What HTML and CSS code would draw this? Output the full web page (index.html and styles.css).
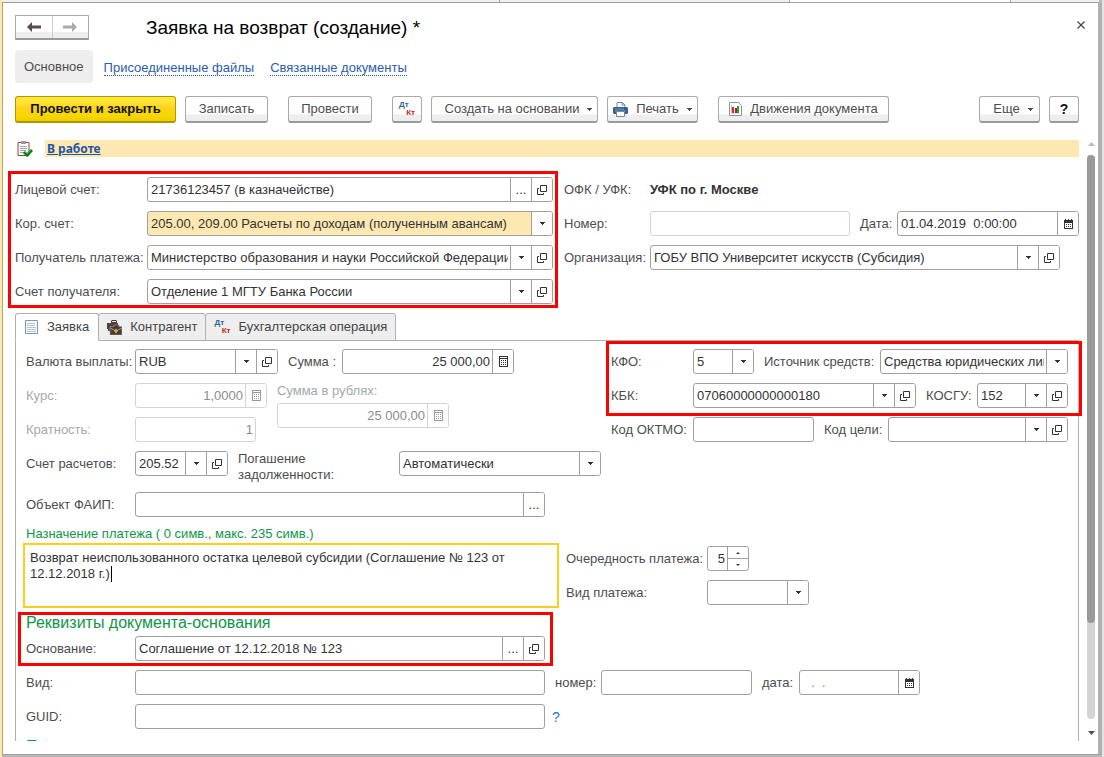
FILE: index.html
```html
<!DOCTYPE html>
<html lang="ru">
<head>
<meta charset="utf-8">
<title>Заявка на возврат (создание) *</title>
<link rel="stylesheet" href="styles.css">
</head>
<body>
<svg class="sprite" aria-hidden="true">
  <symbol id="down" viewBox="0 0 5 3"><path d="M0 0h5v1H4v1H3v1H2V2H1V1H0z"/></symbol>
  <symbol id="up" viewBox="0 0 5 3"><path d="M2 0h1v1h1v1h1v1H0V2h1V1h1z"/></symbol>
  <symbol id="open" viewBox="0 0 10 10"><path d="M3.500 .5h6v6h-6zM2 3.500H.5v6h6V8" fill="none" stroke="currentColor"/></symbol>
  <symbol id="calendar" viewBox="0 0 9 10"><path d="M0 1h1V0h1v1h2V0h1v1h2V0h1v1h1v9H0zM1 4v5h7V4z" fill-rule="evenodd"/><path d="M2 5h1v1H2zM4 5h1v1H4zM6 5h1v1H6zM2 7h1v1H2zM4 7h1v1H4zM6 7h1v1H6z"/></symbol>
  <symbol id="calc" viewBox="0 0 9 11"><path d="M0 0h9v11H0zM1 1v1h7V1zM1 3v7h7V3z" fill-rule="evenodd"/><path d="M2 4h1v1H2zM4 4h1v1H4zM6 4h1v1H6zM2 6h1v1H2zM4 6h1v1H4zM6 6h1v1H6zM2 8h1v1H2zM4 8h1v1H4zM6 8h1v1H6z"/></symbol>
</svg>
<div class="desktop">
  <div class="strip"><span class="strip-tab wide"></span><span class="strip-tab mid"></span><span class="strip-tab open"></span><span class="strip-tab rest"></span></div>
  <main class="window">
    <header class="titlebar">
      <div class="history">
        <button aria-label="Назад"><svg width="14" height="10" viewBox="0 0 14 10"><path d="M0 5l5-5v3.500h9v3H5V10z" fill="#5d4a4a"/></svg></button>
        <button aria-label="Вперед"><svg width="14" height="10" viewBox="0 0 14 10"><path d="M14 5L9 0v3.500H0v3h9V10z" fill="#aaa"/></svg></button>
      </div>
      <h1>Заявка на возврат (создание) *</h1>
      <button class="close" aria-label="Закрыть"><svg width="8" height="8" viewBox="0 0 8 8"><path d="M.5 .5l7 7M7.500 .5l-7 7" stroke="#444" stroke-width="1.200"/></svg></button>
    </header>
    <nav class="sections">
      <span class="current">Основное</span>
      <a href="#files">Присоединенные файлы</a>
      <a href="#linked">Связанные документы</a>
    </nav>
    <div class="toolbar">
      <button class="btn primary">Провести и закрыть</button>
      <button class="btn w83">Записать</button>
      <button class="btn w84 apart">Провести</button>
      <button class="btn square apart" aria-label="Дт Кт"><span class="dtkt"><b>Дт</b><b>Кт</b></span></button>
      <button class="btn create">Создать на основании <svg class="arrow"><use href="#down"/></svg></button>
      <button class="btn print"><svg width="15" height="15" viewBox="0 0 15 15"><path d="M4 6V.5h5.500L12 3v3" fill="#fff" stroke="#6d87a3"/><path d="M9 .5V3h3" fill="none" stroke="#6d87a3"/><path d="M1 5h13l1 1v5l-1 1H1l-1-1V6z" fill="#355f88"/><path d="M2 7h9M2 9h11" stroke="#7397b8"/><path d="M3.500 9.500h8v5h-8z" fill="#fff" stroke="#6d87a3"/></svg> Печать <svg class="arrow"><use href="#down"/></svg></button>
      <button class="btn moves apart"><svg width="13" height="14" viewBox="0 0 13 14"><path d="M.5 .5h9l3 3v10H.5z" fill="#fff" stroke="#8297a7"/><path d="M2.500 3v8h8" fill="none" stroke="#b6c3cc"/><path d="M3 5h2v6H3z" fill="#e22"/><path d="M6 6h2v5H6z" fill="#a22"/><path d="M8 4h2v7H8z" fill="#27a32a"/></svg> Движения документа</button>
      <span class="spring"></span>
      <button class="btn more">Еще <svg class="arrow"><use href="#down"/></svg></button>
      <button class="btn square help">?</button>
    </div>
    <div class="scroll">
      <div class="content">
        <div class="status">
          <svg width="16" height="16" viewBox="0 0 16 16"><path d="M1 1.500h11v13H1z" fill="#fff" stroke="#8b4b3b"/><path d="M4 0h5v3H4z" fill="#999"/><path d="M3 5.500h7M3 7.500h7M3 9.500h6M3 11.500h4" stroke="#9aa5ad"/><path d="M7 11l3 3 5-5" fill="none" stroke="#087d15" stroke-width="3"/><path d="M8 11l2 2 4-4" fill="none" stroke="#23b52d"/></svg>
          <div class="band"><a href="#state">В работе</a></div>
        </div>

        <section class="head">
          <div class="rows accounts marked">
            <div class="row"><label for="acc">Лицевой счет:</label><div class="field"><input id="acc" value="21736123457 (в казначействе)"><button aria-label="Выбрать">...</button><button aria-label="Открыть"><svg class="i10"><use href="#open"/></svg></button></div></div>
            <div class="row"><label for="cor">Кор. счет:</label><div class="field tinted"><select id="cor"><option>205.00, 209.00 Расчеты по доходам (полученным авансам)</option></select><span class="cell"><svg class="arrow"><use href="#down"/></svg></span></div></div>
            <div class="row"><label for="rec">Получатель платежа:</label><div class="field"><input id="rec" value="Министерство образования и науки Российской Федерации"><button aria-label="Список"><svg class="arrow"><use href="#down"/></svg></button><button aria-label="Открыть"><svg class="i10"><use href="#open"/></svg></button></div></div>
            <div class="row"><label for="racc">Счет получателя:</label><div class="field"><input id="racc" value="Отделение 1 МГТУ Банка России"><button aria-label="Список"><svg class="arrow"><use href="#down"/></svg></button><button aria-label="Открыть"><svg class="i10"><use href="#open"/></svg></button></div></div>
          </div>
          <div class="rows org">
            <div class="row"><span class="label">ОФК / УФК:</span><strong>УФК по г. Москве</strong></div>
            <div class="row"><label for="num">Номер:</label><div class="field dim"><input id="num" disabled></div><label class="next l37" for="date">Дата:</label><div class="field w182"><input id="date" value="01.04.2019  0:00:00"><button aria-label="Календарь"><svg class="ical"><use href="#calendar"/></svg></button></div></div>
            <div class="row short"><label for="orgn">Организация:</label><div class="field"><input id="orgn" value="ГОБУ ВПО Университет искусств (Субсидия)"><button aria-label="Список"><svg class="arrow"><use href="#down"/></svg></button><button aria-label="Открыть"><svg class="i10"><use href="#open"/></svg></button></div></div>
          </div>
        </section>

        <div class="tabs" role="tablist">
          <button role="tab" aria-selected="true" class="tab active"><svg width="14" height="14" viewBox="0 0 14 14"><path d="M.5 .5h12v13H.5z" fill="#f7fafc" stroke="#8397b0"/><path d="M2 3.500h8M2 5.500h8M2 7.500h9M2 9.500h9M2 11.500h9" stroke="#b5c7cf"/></svg>Заявка</button>
          <button role="tab" class="tab"><svg width="15" height="15" viewBox="0 0 15 15"><path d="M0 3h4V1l1-1h4l1 1v2h1v8H1V9H0z" fill="#4c4340"/><path d="M5 1.500h4" stroke="#ddd"/><path d="M3 6.500h4V5h5v1.500h3V15H3z" fill="#443c39" stroke="#a79a90" stroke-width=".6"/><path d="M3 8l6 3 6-3" fill="none" stroke="#a79a90"/><path d="M9 8.500l2 2.500-2 2.500L7 11z" fill="#f3a327"/></svg>Контрагент</button>
          <button role="tab" class="tab"><span class="dtkt"><b>Дт</b><b>Кт</b></span>Бухгалтерская операция</button>
        </div>

        <section class="panel">
          <div class="pay">
            <div class="rows money">
              <div class="row"><label for="cur">Валюта выплаты:</label><div class="field w143"><input id="cur" value="RUB"><button aria-label="Список"><svg class="arrow"><use href="#down"/></svg></button><button aria-label="Открыть"><svg class="i10"><use href="#open"/></svg></button></div><label class="next l54" for="sum">Сумма :</label><div class="field w172"><input class="num" id="sum" value="25 000,00"><button aria-label="Калькулятор"><svg class="icalc"><use href="#calc"/></svg></button></div></div>
              <div class="rates">
                <div class="rows">
                  <div class="row dimrow"><label for="rate">Курс:</label><div class="field dim w132"><input class="num" id="rate" value="1,0000" disabled><button disabled aria-label="Калькулятор"><svg class="icalc"><use href="#calc"/></svg></button></div></div>
                  <div class="row dimrow"><label for="mult">Кратность:</label><div class="field dim w121"><input class="num" id="mult" value="1" disabled></div></div>
                </div>
                <div class="stack dimrow"><label for="rub">Сумма в рублях:</label><div class="field dim w172"><input class="num" id="rub" value="25 000,00" disabled><button disabled aria-label="Калькулятор"><svg class="icalc"><use href="#calc"/></svg></button></div></div>
              </div>
              <div class="row top"><label for="calcacc">Счет расчетов:</label><div class="field w93"><input id="calcacc" value="205.52"><button aria-label="Список"><svg class="arrow"><use href="#down"/></svg></button><button aria-label="Открыть"><svg class="i10"><use href="#open"/></svg></button></div><label class="next l161" for="debt">Погашение<br>задолженности:</label><div class="field w202"><select id="debt"><option>Автоматически</option></select><span class="cell"><svg class="arrow"><use href="#down"/></svg></span></div></div>
              <div class="row"><label for="faip">Объект ФАИП:</label><div class="field w410"><input id="faip"><button aria-label="Выбрать">...</button></div></div>
            </div>
            <div class="rows codes">
              <div class="marked rows">
                <div class="row"><label for="kfo">КФО:</label><div class="field w61"><select id="kfo"><option>5</option></select><span class="cell"><svg class="arrow"><use href="#down"/></svg></span></div><label class="next l116" for="src">Источник средств:</label><div class="field"><input id="src" value="Средства юридических лиц"><button aria-label="Список"><svg class="arrow"><use href="#down"/></svg></button></div></div>
                <div class="row"><label for="kbk">КБК:</label><div class="field w223"><input id="kbk" value="07060000000000180"><button aria-label="Список"><svg class="arrow"><use href="#down"/></svg></button><button aria-label="Открыть"><svg class="i10"><use href="#open"/></svg></button></div><label class="next l51" for="kosgu">КОСГУ:</label><div class="field"><input id="kosgu" value="152"><button aria-label="Список"><svg class="arrow"><use href="#down"/></svg></button><button aria-label="Открыть"><svg class="i10"><use href="#open"/></svg></button></div></div>
              </div>
              <div class="row"><label for="oktmo">Код ОКТМО:</label><div class="field w121"><input id="oktmo"></div><label class="next l64" for="goal">Код цели:</label><div class="field"><input id="goal"><button aria-label="Список"><svg class="arrow"><use href="#down"/></svg></button><button aria-label="Открыть"><svg class="i10"><use href="#open"/></svg></button></div></div>
            </div>
          </div>

          <label class="green" for="purpose">Назначение платежа ( 0 симв., макс. 235 симв.)</label>
          <div class="purpose">
            <div class="memo"><textarea id="purpose">Возврат неиспользованного остатка целевой субсидии (Соглашение № 123 от 12.12.2018 г.)</textarea><span class="caret"></span></div>
            <div class="rows order">
              <div class="row"><label for="prio">Очередность платежа:</label><div class="field w42"><input class="num" id="prio" value="5"><span class="spin"><button aria-label="Больше"><svg class="tiny"><use href="#up"/></svg></button><button aria-label="Меньше"><svg class="tiny"><use href="#down"/></svg></button></span></div></div>
              <div class="row"><label for="kind">Вид платежа:</label><div class="field w102"><select id="kind"><option></option></select><span class="cell"><svg class="arrow"><use href="#down"/></svg></span></div></div>
            </div>
          </div>

          <div class="rows basis">
            <div class="reason marked">
              <h2>Реквизиты документа-основания</h2>
              <div class="row"><label for="base">Основание:</label><div class="field w410"><input id="base" value="Соглашение от 12.12.2018 № 123"><button aria-label="Выбрать">...</button><button aria-label="Открыть"><svg class="i10"><use href="#open"/></svg></button></div></div>
            </div>
            <div class="row"><label for="type">Вид:</label><div class="field w410"><input id="type"></div><label class="next l46" for="bnum">номер:</label><div class="field w151"><input id="bnum"></div><label class="next l37" for="bdate">дата:</label><div class="field w121"><input class="blank-date" id="bdate" value="  .  ."><button aria-label="Календарь"><svg class="ical"><use href="#calendar"/></svg></button></div></div>
            <div class="row"><label for="guid">GUID:</label><div class="field w410"><input id="guid"></div><a class="hint" href="#guid-help">?</a></div>
          </div>
          <h2 class="cut">П</h2>
        </section>
      </div>
      <div class="scrollbar" aria-hidden="true">
        <svg class="light" width="7" height="4" viewBox="0 0 7 4"><path d="M3.500 0L7 4H0z"/></svg>
        <span class="track"><span class="thumb"></span></span>
        <svg width="7" height="4" viewBox="0 0 7 4"><path d="M0 0h7L3.500 4z"/></svg>
      </div>
    </div>
  </main>
</div>
</body>
</html>
```

FILE: styles.css
```css
* { box-sizing: border-box; }

body {
  margin: 0;
  background: #b8b8b8;
  color: #4d4d4d;
  font: 13px/16px "Liberation Sans", Arial, sans-serif;
}

button, input, select, textarea { font: inherit; color: inherit; margin: 0; }
button { display: flex; align-items: center; justify-content: center; padding: 0; border: 0; background: none; }
h1, h2 { margin: 0; font-weight: normal; }
svg { display: block; flex: none; fill: currentColor; }

.sprite { position: absolute; width: 0; height: 0; }
.arrow { width: 5px; height: 3px; }
.tiny { width: 4px; height: 2px; }
.i10 { width: 10px; height: 10px; }
.ical { width: 9px; height: 10px; }
.icalc { width: 9px; height: 11px; }

/* Window frame */
.desktop {
  display: flex;
  flex-direction: column;
  height: 100vh;
  padding-bottom: 2px;
  border-left: 2px solid #fce8b0;
  border-right: 2px solid #e4e4e4;
}
.strip { display: flex; height: 3px; background: #f0f0f0; border-bottom: 1px solid #a0a0a0; margin-right: 3px; }
.strip-tab { border-right: 1px solid #a0a0a0; }
.strip-tab.wide { flex: 498; }
.strip-tab.mid { flex: 289; }
.strip-tab.open { flex: 221; background: #fff; }
.strip-tab.rest { flex: 88; border: 0; }
.window {
  flex: 1;
  min-height: 0;
  display: flex;
  flex-direction: column;
  padding: 12px 3px 13px 12px;
  background: #fff;
  border: solid #a0a0a0;
  border-width: 0 4px 1px 1px;
  border-left-color: #b9a55e;
  border-right-color: #b0b0b0;
}

.titlebar { display: flex; align-items: center; height: 25px; margin-bottom: 10px; }
.history { display: flex; width: 74px; height: 25px; margin-right: 57px; border: 1px solid #aaa; border-bottom: 2px solid #999; background: linear-gradient(#fff 70%, #eee 75%); }
.history button { flex: 1; }
.history button + button { border-left: 1px solid #ccc; }
.titlebar h1 { color: #000; font-size: 19px; line-height: 24px; }
.close { width: 20px; height: 20px; margin: 0 4px 6px auto; }

.sections { display: flex; align-items: center; margin-bottom: 13px; }
.current { padding: 9px 9px 8px; margin-right: 11px; border-radius: 4px; background: #eee; }
.sections a { margin: 3px 16px 0 0; color: #2a5db0; text-decoration: none; line-height: 14px; border-bottom: 1px dotted #2a5db0; }

.toolbar { display: flex; gap: 9px; padding-right: 16px; margin-bottom: 17px; }
.btn {
  height: 27px;
  gap: 8px;
  border: 1px solid #aaa;
  border-bottom: 2px solid #999;
  border-radius: 3px;
  background: linear-gradient(#fff 70%, #eee 75%);
  white-space: nowrap;
}
.primary { width: 161px; color: #111; font-weight: bold; border-color: #b39500; background: linear-gradient(#ffe636 20%, #ffd21c 45%, #f7d800 75%, #edcf00); }
.w83 { width: 83px; }
.w84 { width: 84px; }
.apart { margin-left: 11px; }
.square { width: 30px; }
.create { width: 167px; padding-left: 8px; }
.print { width: 91px; }
.moves { width: 171px; }
.more { width: 61px; padding-left: 7px; }
.help { color: #111; font-weight: bold; font-size: 14px; }
.spring { flex: 1; }
.dtkt { display: grid; width: 16px; color: #326592; font-size: 8px; line-height: 8px; text-align: left; }
.dtkt b + b { color: #c22717; text-align: right; }

/* Scrolled area */
.scroll { flex: 1; min-height: 0; display: flex; gap: 8px; }
.content { flex: 1; min-width: 0; display: flex; flex-direction: column; }
.scrollbar { display: flex; flex-direction: column; align-items: center; width: 8px; padding: 2px 0 6px; color: #5d4a4a; }
.light { color: #bbb; }
.track { flex: 1; width: 8px; margin: 9px 0 12px; border-radius: 4px; background: #d4d4d4; }
.thumb { display: block; height: 83%; border-radius: 4px; background: #999; }

.status { display: flex; align-items: center; gap: 12px; padding-left: 2px; margin-bottom: 20px; }
.band { flex: 1; height: 17px; padding-left: 2px; background: #fce8b0; }
.band a { color: #2255a4; font: bold 12px/17px "Noto Sans", sans-serif; }

/* Field rows */
.rows { display: flex; flex-direction: column; gap: 9px; }
.row { display: flex; align-items: center; min-height: 25px; white-space: nowrap; }
.row > label:first-child, .label { flex: none; width: 109px; }
.accounts .row > label:first-child { width: 132px; }
.org .row > :first-child { width: 86px; }
.codes .row > label:first-child { width: 82px; }
.order .row > label:first-child { width: 141px; }
.top { align-items: flex-start; height: 32px; }
.top label:first-child { line-height: 25px; }
.row .next { flex: none; margin-left: 10px; }
.l37 { width: 37px; }
.l46 { width: 46px; }
.l51 { width: 51px; }
.l54 { width: 54px; }
.l64 { width: 64px; }
.l116 { width: 116px; }
.l161 { width: 161px; }

.field { flex: 1; min-width: 0; display: flex; height: 25px; border: 1px solid #a0a0a0; border-radius: 3px; background: #fff; color: #333; overflow: hidden; }
.field input, .field select { flex: 1; width: 0; min-width: 0; padding: 0 0 0 3px; border: 0; outline: 0; background: none; appearance: none; white-space: pre; }
.field input.num { padding: 0 2px 0 0; text-align: right; }
.field > button, .cell { display: flex; align-items: center; justify-content: center; flex: none; width: 21px; margin-left: 2px; border-left: 1px solid #a0a0a0; background: #fff; }
.field > button + button, .field > .num + button { margin-left: 0; }
.tinted { background: #fce8b0; }
.dim { border-color: #d4d4d4; color: #8c8c8c; }
.dim > button { border-color: #d4d4d4; color: #999; }
.dimrow label { color: #a3aaaa; }
.w42, .w61, .w93, .w102, .w121, .w132, .w143, .w151, .w172, .w182, .w202, .w223, .w410 { flex: none; }
.w42 { width: 42px; }
.w61 { width: 61px; }
.w93 { width: 93px; }
.w102 { width: 102px; }
.w121 { width: 121px; }
.w132 { width: 132px; }
.w143 { width: 143px; }
.w151 { width: 151px; }
.w172 { width: 172px; }
.w182 { width: 182px; }
.w202 { width: 202px; }
.w223 { width: 223px; }
.w410 { width: 410px; }
.spin { display: flex; flex-direction: column; width: 21px; border-left: 1px solid #a0a0a0; }
.spin button { flex: 1; }
.spin button + button { border-top: 1px solid #a0a0a0; }
.field .blank-date { padding-left: 4px; color: #c8702a; }

.marked { position: relative; }
.marked::before { content: ""; position: absolute; inset: -6px -5px -4px -7px; border: 3px solid #f00; pointer-events: none; }

.head { display: grid; grid-template-columns: 538fr 515fr; gap: 11px; margin-bottom: 9px; }
.org strong { color: #333; }
.short { margin-right: 19px; }

/* Tabs */
.tabs { display: flex; flex: none; height: 28px; margin-bottom: -1px; position: relative; }
.tab { gap: 8px; padding: 0 8px; margin-left: -1px; border: 1px solid #b0b0b0; border-radius: 3px 3px 0 0; background: #eee; color: #444; white-space: nowrap; }
.active { margin-left: 0; padding: 0 9px; background: #fff; border-bottom-color: #fff; }

.panel { flex: 1; min-height: 0; overflow-x: visible; overflow-y: clip; padding: 8px 10px 0; border: solid #b0b0b0; border-width: 1px 1px 0; }
.pay { display: flex; justify-content: space-between; margin-bottom: 9px; }
.codes { width: 457px; margin-left: -30px; }
.codes .marked::before { inset: -8px -14px -8px -5px; }
.money { flex: none; }
.rates { display: flex; gap: 10px; }
.stack { display: flex; flex-direction: column; gap: 3px; }
.stack .field { flex: none; }
.stack label { height: 17px; }
.green, h2 { color: #0f9548; }
.green { display: block; }
.purpose { display: flex; gap: 7px; margin: 1px 0 6px -3px; }
.memo { position: relative; width: 536px; height: 65px; }
.memo textarea { display: block; width: 100%; height: 100%; padding: 5px; border: 2px solid #fccf1c; outline: 0; resize: none; color: #333; line-height: 16px; }
.caret { position: absolute; left: 88px; top: 23px; width: 1px; height: 16px; background: #000; }
.order { padding-top: 3px; }
.reason { width: 520px; }
.reason.marked::before { inset: -2px -7px -5px -8px; }
h2 { font-size: 16px; line-height: 18px; margin-bottom: 4px; }
.hint { margin-left: 7px; color: #1979c9; font-size: 14px; text-decoration: none; }
.cut { margin: 9px 0 0; }
```
